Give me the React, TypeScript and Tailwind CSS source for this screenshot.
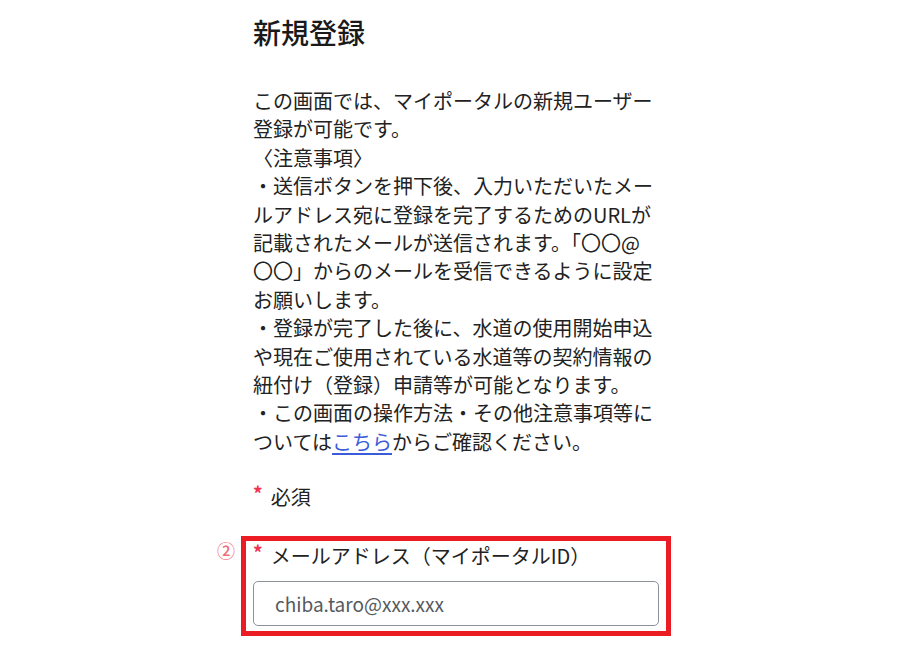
import React from "react";

export default function App() {
  return (
    <div
      className="min-h-[649px] w-[901px] bg-white text-[#1f1f1f]"
      style={{ fontFamily: '"Noto Sans CJK JP", "Noto Sans", sans-serif' }}
    >
      <div className="pl-[253px] pt-[14px] w-[658px]">
        <h1 className="text-[28px] font-medium leading-[36px] text-[#1a1a1a]">新規登録</h1>
        <p className="mt-[37px] text-[20px] leading-[28.4px] text-[#222]">
          この画面では、マイポータルの新規ユーザー登録が可能です。
          <br />
          〈注意事項〉
          <br />
          ・送信ボタンを押下後、入力いただいたメールアドレス宛に登録を完了するためのURLが記載されたメールが送信されます。「〇〇@〇〇」からのメールを受信できるように設定お願いします。
          <br />
          ・登録が完了した後に、水道の使用開始申込や現在ご使用されている水道等の契約情報の紐付け（登録）申請等が可能となります。
          <br />
          ・この画面の操作方法・その他注意事項等については
          <a href="#" className="text-[#3b5bdb] underline underline-offset-[3px]">こちら</a>
          からご確認ください。
        </p>
        <div className="mt-[27px] flex items-start text-[20px] leading-[28px] text-[#222]">
          <span className="mt-[-4px] mr-[8px] text-[19px] font-bold text-[#f0314f]">*</span>
          <span>必須</span>
        </div>
        <div className="relative mt-[31px]">
          <div className="pointer-events-none absolute -top-[6px] -left-[12px] -right-[13px] -bottom-[10px] border-[5px] border-[#ec1c24]" />
          <span className="absolute -left-[36px] top-[-5px] text-[18px] font-medium text-[#f26b7a]">②</span>
          <div className="flex items-start text-[20px] leading-[28px] text-[#222]">
            <span className="mt-[-4px] mr-[8px] text-[19px] font-bold text-[#f0314f]">*</span>
            <span>メールアドレス（マイポータルID）</span>
          </div>
          <div className="mt-[11px] flex h-[45px] w-[406px] items-center rounded-[5px] border border-[#8c919a] pl-[21px] text-[19px] text-[#555a60]">
            chiba.taro@xxx.xxx
          </div>
        </div>
      </div>
    </div>
  );
}
